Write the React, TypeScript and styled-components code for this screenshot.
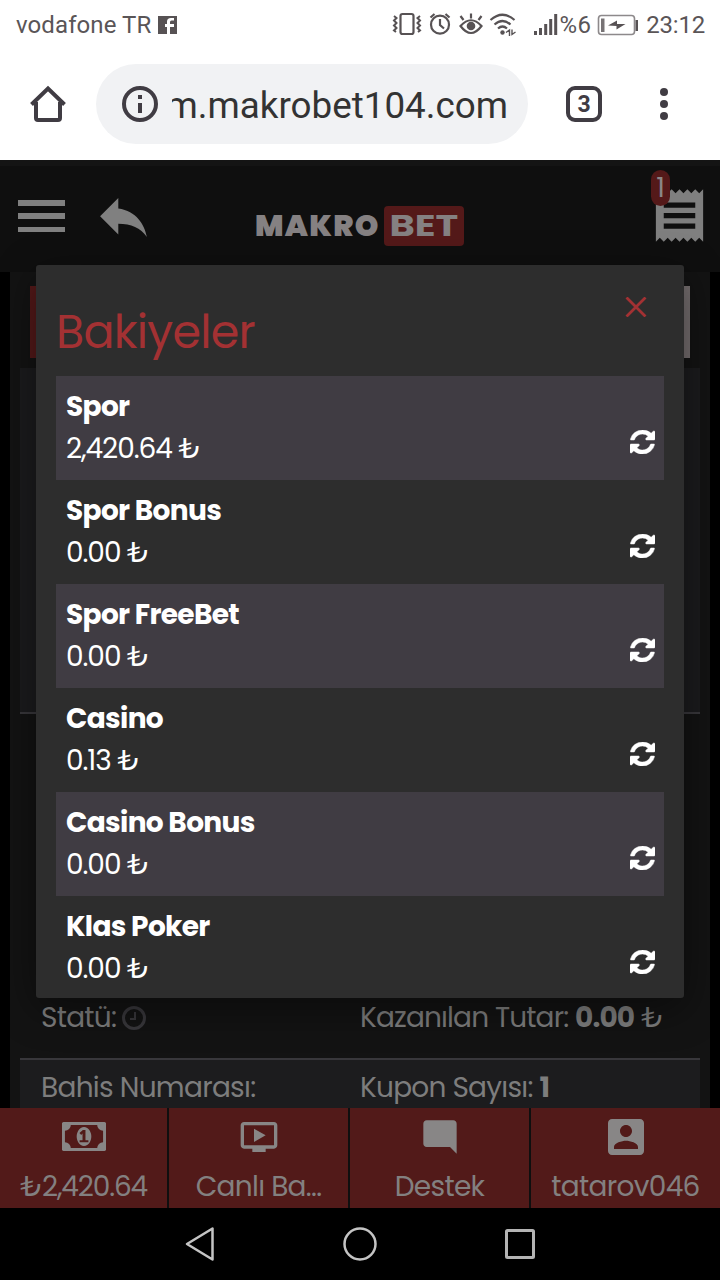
import React from "react";
import styled, { createGlobalStyle } from "styled-components";

const Global = createGlobalStyle`
  *, *::before, *::after { box-sizing: border-box; }
  body { margin: 0; background: #000; }
  svg { display: block; flex: none; }
`;

const site = `"Poppins", Inter, "Open Sans", sans-serif`;

const Screen = styled.div`
  width: 720px;
  height: 1280px;
  display: flex;
  flex-direction: column;
  overflow: hidden;
  background: #000;
`;

const Text = styled.span<{ $ls?: number }>`
  letter-spacing: ${(p) => p.$ls ?? 0}px;
  white-space: pre;
`;

/* Phone status bar */
const StatusBar = styled.div`
  height: 50px;
  padding: 0 15px 0 16px;
  display: flex;
  align-items: center;
  background: #fff;
  color: #5a5557;
  font: 400 24px/50px Roboto, sans-serif;
`;

const FacebookIcon = styled.svg`
  margin-left: 7px;
`;

const StatusIcons = styled.div`
  margin-left: auto;
  display: flex;
  align-items: center;
`;

const Battery = styled.svg`
  margin: 0 7px 0 6px;
`;

/* Browser toolbar */
const Toolbar = styled.div`
  height: 110px;
  padding: 14px 28px 16px;
  display: flex;
  align-items: center;
  background: #fff;
`;

const Address = styled.div`
  width: 432px;
  height: 80px;
  margin-left: 28px;
  padding: 0 20px 0 24px;
  display: flex;
  align-items: center;
  gap: 12px;
  border-radius: 40px;
  background: #f1f2f4;
`;

const Url = styled.div`
  flex: 1;
  min-width: 0;
  height: 80px;
  display: flex;
  justify-content: flex-end;
  overflow: hidden;
  color: #333;
  font: 400 36.8px/84px Roboto, sans-serif;
`;

const TabCount = styled.div`
  width: 36px;
  height: 36px;
  margin-left: 38px;
  border: 4px solid #403c43;
  border-radius: 9px;
  color: #403c43;
  font: 700 23px/29px Roboto, sans-serif;
  text-align: center;
`;

const Dots = styled.div`
  margin: 0 0 0 58px;
  display: flex;
  flex-direction: column;
  gap: 4px;
`;

const Dot = styled.i`
  width: 8px;
  height: 8px;
  border-radius: 50%;
  background: #403c43;
`;

/* Web page */
const Page = styled.div`
  position: relative;
  height: 1048px;
  flex: none;
  overflow: hidden;
  display: flex;
  flex-direction: column;
  font-family: ${site};
  color: #7d7d7d;
`;

const SiteHeader = styled.header`
  height: 112px;
  flex: none;
  padding: 0 9px 6px 18px;
  display: flex;
  align-items: center;
  border-top: 6px solid #141414;
  background: #0f0f0f;
`;

const Burger = styled.div`
  width: 47px;
  height: 32px;
  display: flex;
  flex-direction: column;
  justify-content: space-between;
`;

const BurgerBar = styled.i`
  height: 5.5px;
  background: #808080;
`;

const ReplyIcon = styled.svg`
  margin: 3px 0 0 35px;
`;

const Logo = styled.div`
  display: flex;
  align-items: center;
  width: 209px;
  margin: 20px 0 0 108px;
  font-weight: 900;
  font-size: 30px;
  line-height: 40px;
  color: #858182;
`;

const LogoBox = styled.span`
  width: 80px;
  height: 40px;
  margin-left: auto;
  border-radius: 4px;
  background: #541919;
  font-weight: 700;
  text-align: center;
`;

const BoxWord = styled.span`
  display: inline-block;
  transform: scaleX(1.28);
`;

const Coupon = styled.div`
  position: relative;
  margin: 0 0 1px auto;
`;

const CouponBadge = styled.span`
  position: absolute;
  left: 3px;
  top: -14px;
  width: 19px;
  height: 36px;
  border-radius: 9.5px;
  background: #541919;
  color: #8b8686;
  font-size: 27px;
  font-weight: 400;
  line-height: 35px;
  text-align: center;
`;

const Content = styled.main`
  height: 836px;
  flex: none;
  margin: 0 10px;
  padding: 14px 10px 0;
  background: #131313;
`;

const Filters = styled.div`
  height: 72px;
  margin: 0 10px 10px;
  display: flex;
  justify-content: space-between;
`;

const FilterEdge = styled.i<{ $color: string }>`
  width: 50%;
  background: ${(p) => p.$color};
`;

const Bet = styled.section<{ $height: number; $shade: string }>`
  height: ${(p) => p.$height}px;
  padding: 0 21px;
  display: flex;
  flex-direction: column;
  justify-content: flex-end;
  border-bottom: 2px solid #38373b;
  background: ${(p) => p.$shade};
`;

const BetLine = styled.div<{ $height: number }>`
  height: ${(p) => p.$height}px;
  display: grid;
  grid-template-columns: 319px 1fr;
  font-size: 28px;
  font-weight: 400;
  line-height: 42px;
`;

const BetCell = styled.div`
  display: flex;
  height: 42px;
  align-items: center;
  b { font-weight: 700; }
`;

const ClockIcon = styled.svg`
  margin-left: 5px;
`;

const TabBar = styled.nav`
  position: absolute;
  left: 0;
  bottom: 0;
  width: 720px;
  height: 100px;
  display: grid;
  grid-template-columns: 167px 179px 179px 1fr;
  gap: 2px;
  background: #0f0f0f;
`;

const Tab = styled.div`
  display: flex;
  flex-direction: column;
  align-items: center;
  background: #521a19;
  color: #838080;
  font-size: 28px;
  font-weight: 400;
  line-height: 43px;
`;

const TabIcon = styled.div`
  height: 57px;
  display: flex;
  align-items: center;
`;

/* Balances dialog */
const Modal = styled.div`
  position: absolute;
  left: 36px;
  top: 105px;
  width: 648px;
  height: 733px;
  padding: 0 20px;
  overflow: hidden;
  border-radius: 3px;
  background: #2d2d2d;
  box-shadow: 0 10px 40px rgba(0, 0, 0, 0.45);
`;

const ModalHead = styled.div`
  height: 111px;
  display: flex;
  justify-content: space-between;
  color: #a33133;
`;

const Title = styled.h1`
  margin: 32px 0 0;
  font-size: 46px;
  font-weight: 400;
  line-height: 70px;
`;

const Close = styled.div`
  padding: 32px 17px 0 0;
`;

const Row = styled.div`
  height: 104px;
  padding: 10px 9px 0 10px;
  display: flex;
  justify-content: space-between;
  color: #fff;
  font-size: 28px;
  line-height: 42px;
  &:nth-child(even) { background: #403c43; }
`;

const RowName = styled.div`
  font-weight: 700;
`;

const RowAmount = styled.div`
  font-weight: 400;
`;

const Refresh = styled.div`
  padding-top: 44px;
`;

/* Phone navigation */
const AndroidNav = styled.div`
  height: 72px;
  display: flex;
  justify-content: center;
  align-items: center;
  gap: 124px;
  background: #000;
`;

const RefreshIcon = () => (
  <svg width="25" height="24" viewBox="0 128 1536 1536" preserveAspectRatio="none" fill="#fff" stroke="#fff" strokeWidth="30">
    <path d="M1511 1056q0 5-1 7-64 268-268 434.5t-478 166.5q-146 0-282.5-55t-243.5-157l-129 129q-19 19-45 19t-45-19-19-45v-448q0-26 19-45t45-19h448q26 0 45 19t19 45-19 45l-137 137q71 66 161 102t187 36q134 0 250-65t186-179q11-17 53-117 8-23 30-23h192q13 0 22.500 9.500t9.500 22.500zm25-800v448q0 26-19 45t-45 19h-448q-26 0-45-19t-19-45 19-45l138-138q-148-137-349-137-134 0-250 65t-186 179q-11 17-53 117-8 23-30 23h-199q-13 0-22.500-9.500t-9.500-22.500v-7q65-268 270-434.500t480-166.500q146 0 284 55.500t245 156.500l130-129q19-19 45-19t45 19 19 45z" />
  </svg>
);

const MoneyIcon = () => (
  <svg width="44" height="29" viewBox="0 256 1920 1280" preserveAspectRatio="none" fill="#888686">
    <path d="M768 1152h384v-96h-128v-448h-114l-148 137 77 80q42-37 55-57h2v288h-128v96zm512-256q0 70-21 142t-59.500 134-101.500 101-138 39-138-39-101.500-101-59.500-134-21-142 21-142 59.500-134 101.500-101 138-39 138 39 101.500 101 59.500 134 21 142zm512 256v-512q-106 0-181-75t-75-181h-1152q0 106-75 181t-181 75v512q106 0 181 75t75 181h1152q0-106 75-181t181-75zm128-832v1152q0 26-19 45t-45 19h-1792q-26 0-45-19t-19-45v-1152q0-26 19-45t45-19h1792q26 0 45 19t19 45z" />
  </svg>
);

const MaterialIcon = ({ d, size, color = "#888686" }: { d: string; size: number; color?: string }) => (
  <svg width={size} height={size} viewBox="0 0 24 24" fill={color}>
    <path d={d} />
  </svg>
);

const REPLY = "M10 9V5l-7 7 7 7v-4.100c5 0 8.500 1.600 11 5.100-1-5-4-10-11-11z";
const RECEIPT =
  "M18 17H6v-2h12v2zm0-4H6v-2h12v2zm0-4H6V7h12v2zM3 22l1.5-1.5L6 22l1.5-1.5L9 22l1.5-1.5L12 22l1.5-1.5L15 22l1.5-1.5L18 22l1.5-1.5L21 22V2l-1.5 1.5L18 2l-1.5 1.5L15 2l-1.5 1.5L12 2l-1.5 1.5L9 2 7.5 3.5 6 2 4.5 3.5 3 2v20z";
const VIDEO =
  "M21 3H3c-1.11 0-2 .89-2 2v12c0 1.1.89 2 2 2h5v2h8v-2h5c1.1 0 1.99-.9 1.99-2L23 5c0-1.1-.9-2-2-2zm0 14H3V5h18v12zm-5-6l-7 4V7z";
const COMMENT = "M21.99 4c0-1.1-.89-2-1.99-2H4c-1.1 0-2 .9-2 2v12c0 1.1.9 2 2 2h14l4 4-.01-18z";
const ACCOUNT =
  "M3 5v14c0 1.1.89 2 2 2h14c1.1 0 2-.9 2-2V5c0-1.1-.9-2-2-2H5c-1.11 0-2 .9-2 2zm12 4c0 1.66-1.34 3-3 3s-3-1.34-3-3 1.34-3 3-3 3 1.34 3 3zm-9 8c0-2 4-3.1 6-3.1s6 1.1 6 3.1v1H6v-1z";

/* Vibrate, alarm, eye comfort, Wi-Fi and mobile signal */
const StatusGlyphs = () => (
  <svg width="168" height="26" viewBox="392 12 168 26" fill="none" stroke="#575254" strokeWidth="2.200">
    <rect x="400.5" y="14" width="13" height="20" rx="2" />
    <path d="M394 16l2.500 2-2.500 2.500 2.500 2.500-2.500 2.500 2.500 2.500-2.500 2.500 2 1.500M420 16l-2.500 2 2.500 2.500-2.500 2.500 2.500 2.500-2.500 2.500 2.500 2.500-2 1.500" strokeWidth="2" />
    <circle cx="440" cy="24.700" r="9" />
    <path d="M440 19v6l4 3.500M430.500 17.500l4-3.500M449.500 17.500l-4-3.500" />
    <path d="M460.500 26q10.500-11.500 21 0q-10.500 14-21 0zM471 18.500v-5M463.500 20l-3-4M478.500 20l3-4" />
    <circle cx="471" cy="26" r="4.300" fill="#575254" stroke="none" />
    <path d="M490.500 20q12-10.500 24 0M494.500 24.500q8-7 16 0M498 28.500q4.500-4 9 0" />
    <circle cx="502.500" cy="32.500" r="2.200" fill="#575254" stroke="none" />
    <path d="M506 32.500l3.500-2.500v6M512 29.500v5l3.500-2.500" strokeWidth="1.400" />
    <path d="M535.500 31v4M540.500 28v7M545.700 24v11M550.700 19v16M555.700 14v21" strokeWidth="3" />
  </svg>
);

const BatteryIcon = () => (
  <Battery width="42" height="22" viewBox="0 0 42 22">
    <rect x="1.500" y="1.500" width="36" height="19" rx="3" fill="none" stroke="#8d898b" strokeWidth="1.600" />
    <path d="M4 4.500h3.500v13.500h-3.500z" fill="#777375" />
    <path d="M11 11.500l9-5v3.500h8.500l-9 5.500v-3.500z" fill="#575254" />
    <path d="M38.500 6h2.500v11h-2.500z" fill="#575254" />
  </Battery>
);

const balances = [
  { name: "Spor", amount: "2,420.64 ₺" },
  { name: "Spor Bonus", amount: "0.00 ₺" },
  { name: "Spor FreeBet", amount: "0.00 ₺" },
  { name: "Casino", amount: "0.13 ₺" },
  { name: "Casino Bonus", amount: "0.00 ₺" },
  { name: "Klas Poker", amount: "0.00 ₺" },
];

export default function App() {
  return (
    <Screen>
      <Global />
      <StatusBar>
        <Text $ls={0.1}>vodafone TR</Text>
        <FacebookIcon width="19" height="18" viewBox="0 0 19 18">
          <path d="M0 0h19v18H0z" fill="#575254" />
          <path d="M12 18v-7h4V8h-4V6q0-1.500 1.500-1.500H16V2h-3q-4 0-4 3.500V8H7v3h2v7z" fill="#fff" />
        </FacebookIcon>
        <StatusIcons>
          <StatusGlyphs />
          <Text $ls={0.3}>%6</Text>
          <BatteryIcon />
          <Text $ls={-0.2}>23:12</Text>
        </StatusIcons>
      </StatusBar>

      <Toolbar>
        <svg width="40" height="40" viewBox="0 0 40 40" fill="none" stroke="#403c43" strokeWidth="4">
          <path d="M3.500 20.500L20 4.500l16.500 16M8 18v16q0 2 2 2h20q2 0 2-2V18" />
        </svg>
        <Address>
          <svg width="40" height="40" viewBox="0 0 40 40" fill="none" stroke="#403c43" strokeWidth="4">
            <circle cx="20" cy="20" r="16" />
            <path d="M20 19v10M20 11v4" />
          </svg>
          <Url>
            <Text>m.makrobet104.com</Text>
          </Url>
        </Address>
        <TabCount>3</TabCount>
        <Dots>
          <Dot />
          <Dot />
          <Dot />
        </Dots>
      </Toolbar>

      <Page>
        <SiteHeader>
          <Burger>
            <BurgerBar />
            <BurgerBar />
            <BurgerBar />
          </Burger>
          <ReplyIcon width="47" height="39" viewBox="3 5 18 15" fill="#808080">
            <path d={REPLY} />
          </ReplyIcon>
          <Logo>
            <Text $ls={1.3}>MAKRO</Text>
            <LogoBox>
              <BoxWord>BET</BoxWord>
            </LogoBox>
          </Logo>
          <Coupon>
            <MaterialIcon d={RECEIPT} size={63} color="#7f7f7f" />
            <CouponBadge>1</CouponBadge>
          </Coupon>
        </SiteHeader>

        <Content>
          <Filters>
            <FilterEdge $color="#541919" />
            <FilterEdge $color="#756e6f" />
          </Filters>
          <Bet $height={346} $shade="#1b1b1d" />
          <Bet $height={346} $shade="#131313">
            <BetLine $height={61}>
              <BetCell>
                <Text $ls={-0.75}>Statü:</Text>
                <ClockIcon width="26" height="26" viewBox="0 0 26 26" fill="none" stroke="#38373b">
                  <circle cx="13" cy="13" r="10.500" strokeWidth="3" />
                  <path d="M14 7v7h-5" strokeWidth="2" />
                </ClockIcon>
              </BetCell>
              <BetCell>
                <Text $ls={-0.85}>
                  Kazanılan Tutar: <b>0.00</b> ₺
                </Text>
              </BetCell>
            </BetLine>
          </Bet>
          <Bet $height={50} $shade="#1c1c1e">
            <BetLine $height={41}>
              <BetCell>
                <Text $ls={-0.72}>Bahis Numarası:</Text>
              </BetCell>
              <BetCell>
                <Text $ls={-0.75}>
                  Kupon Sayısı: <b>1</b>
                </Text>
              </BetCell>
            </BetLine>
          </Bet>
        </Content>

        <TabBar>
          <Tab>
            <TabIcon>
              <MoneyIcon />
            </TabIcon>
            <Text $ls={-1.15}>₺2,420.64</Text>
          </Tab>
          <Tab>
            <TabIcon>
              <MaterialIcon d={VIDEO} size={40} />
            </TabIcon>
            <Text $ls={-0.7}>Canlı Ba...</Text>
          </Tab>
          <Tab>
            <TabIcon>
              <MaterialIcon d={COMMENT} size={40} />
            </TabIcon>
            <Text $ls={-0.7}>Destek</Text>
          </Tab>
          <Tab>
            <TabIcon>
              <MaterialIcon d={ACCOUNT} size={48} />
            </TabIcon>
            <Text $ls={-0.7}>tatarov046</Text>
          </Tab>
        </TabBar>

        <Modal>
          <ModalHead>
            <Title>
              <Text $ls={-0.75}>Bakiyeler</Text>
            </Title>
            <Close>
              <svg width="22" height="20" viewBox="0 0 22 20" fill="none" stroke="#a33133" strokeWidth="2.800">
                <path d="M1.500 0.500l19 19M20.500 0.500l-19 19" />
              </svg>
            </Close>
          </ModalHead>
          {balances.map((b) => (
            <Row key={b.name}>
              <div>
                <RowName>
                  <Text $ls={-0.65}>{b.name}</Text>
                </RowName>
                <RowAmount>
                  <Text $ls={-1.05}>{b.amount}</Text>
                </RowAmount>
              </div>
              <Refresh>
                <RefreshIcon />
              </Refresh>
            </Row>
          ))}
        </Modal>
      </Page>

      <AndroidNav>
        <svg width="36" height="36" viewBox="0 0 36 36" fill="none" stroke="#c4c4c4" strokeWidth="2.500" strokeLinejoin="round">
          <path d="M5 18L30.500 2.500v31z" />
        </svg>
        <svg width="36" height="36" viewBox="0 0 36 36" fill="none" stroke="#c4c4c4" strokeWidth="2.500">
          <circle cx="18" cy="18" r="15.500" />
        </svg>
        <svg width="36" height="36" viewBox="0 0 36 36" fill="none" stroke="#b4b4b4" strokeWidth="3">
          <rect x="4.500" y="4.500" width="27" height="27" rx="1" />
        </svg>
      </AndroidNav>
    </Screen>
  );
}
